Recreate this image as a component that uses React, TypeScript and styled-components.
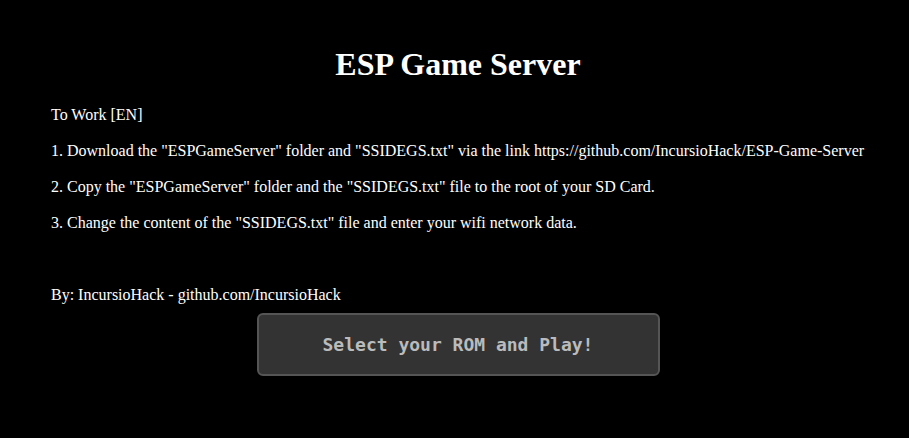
import React from "react";
import styled, { createGlobalStyle } from "styled-components";

const Global = createGlobalStyle`
  html, body { margin: 0; padding: 0; background: #000; }
  body { color: #fff; font-family: "Liberation Serif", "Times New Roman", serif; }
`;

const Page = styled.main`
  padding: 46px 9px 40px 16px;
  display: flex;
  flex-direction: column;
  align-items: stretch;
`;

const Title = styled.h1`
  margin: 0 0 22px;
  text-align: center;
  font-size: 32px;
  font-weight: bold;
  line-height: 37px;
`;

const Text = styled.section`
  padding-left: 35px;
`;

const Para = styled.p<{ $gap?: number }>`
  margin: 0 0 ${(p) => p.$gap ?? 16}px;
  font-size: 16px;
  line-height: 20px;
  white-space: nowrap;
`;

const ButtonRow = styled.div`
  display: flex;
  justify-content: center;
  margin-top: 8px;
`;

const PlayButton = styled.button`
  width: 403px;
  height: 63px;
  background: #333;
  border: 2px solid #555;
  border-radius: 6px;
  color: #bbb;
  font-family: "DejaVu Sans Mono", "Liberation Mono", monospace;
  font-weight: bold;
  font-size: 18px;
  cursor: pointer;
`;

export default function App() {
  return (
    <>
      <Global />
      <Page>
        <Title>ESP Game Server</Title>
        <Text>
          <Para>To Work [EN]</Para>
          <Para>
            1. Download the "ESPGameServer" folder and "SSIDEGS.txt" via the link
            https://github.com/IncursioHack/ESP-Game-Server
          </Para>
          <Para>
            2. Copy the "ESPGameServer" folder and the "SSIDEGS.txt" file to the root of your SD
            Card.
          </Para>
          <Para $gap={52}>
            3. Change the content of the "SSIDEGS.txt" file and enter your wifi network data.
          </Para>
          <Para $gap={0}>By: IncursioHack - github.com/IncursioHack</Para>
        </Text>
        <ButtonRow>
          <PlayButton>Select your ROM and Play!</PlayButton>
        </ButtonRow>
      </Page>
    </>
  );
}
